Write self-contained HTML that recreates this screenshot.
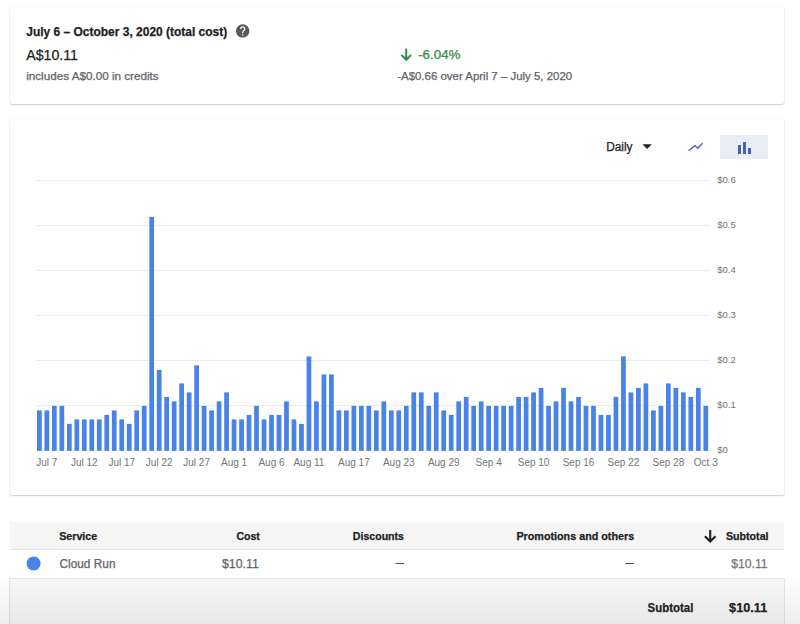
<!DOCTYPE html>
<html><head><meta charset="utf-8">
<style>
html,body{margin:0;padding:0;background:#fff;width:800px;height:624px;overflow:hidden;position:relative;font-family:"Liberation Sans",sans-serif;color:#202124}
.box{position:absolute}
.card{position:absolute;background:#fff;box-shadow:0 1px 1.5px 0 rgba(0,0,0,.18),0 0 1.5px 0 rgba(0,0,0,.12);border-radius:2px}
svg{position:absolute;left:0;top:0}
</style></head><body>
<div class="card" style="left:10px;top:7px;width:774px;height:97px"></div>
<div class="card" style="left:10px;top:119px;width:774px;height:376px"></div>
<div class="box" style="left:720px;top:135.25px;width:48px;height:23.25px;background:#e8edf8"></div>
<div class="box" style="left:10px;top:522px;width:774px;height:27px;background:#f5f5f5"></div>
<div class="box" style="left:10px;top:549px;width:774px;height:1px;background:#e6e6e6"></div>
<div class="box" style="left:9px;top:578px;width:774px;height:60px;background:#f8f8f8;border:1px solid #e3e3e3;border-bottom:0"></div>
<div class="box" style="left:0;top:578px;width:800px;height:46px;background:linear-gradient(rgba(0,0,0,0.005),rgba(0,0,0,0.065))"></div>
<svg width="800" height="624" font-family="Liberation Sans">
<g transform="translate(234.72 22.92) scale(0.665)"><path fill="#56595d" d="M12 2C6.48 2 2 6.48 2 12s4.48 10 10 10 10-4.48 10-10S17.52 2 12 2zm1 17h-2v-2h2v2zm2.07-7.75l-.9.92C13.45 12.9 13 13.5 13 15h-2v-.5c0-1.1.45-2.1 1.170-2.83l1.24-1.26c.37-.36.59-.86.59-1.41 0-1.1-.9-2-2-2s-2 .9-2 2H8c0-2.21 1.79-4 4-4s4 1.79 4 4c0 .88-.36 1.680-.93 2.250z"/></g>
<path d="M406.2 48.6 V59.5 M401.3 54.9 L406.2 59.8 L411.1 54.9" fill="none" stroke="#378a4a" stroke-width="2"/>
<path d="M642.5 144.2 L651.8 144.2 L647.15 149 Z" fill="#202124"/>
<polyline points="688.5,150.8 695,145.6 697.8,148.2 702.6,143.2" fill="none" stroke="#4464b8" stroke-width="1.4"/>
<g fill="#4263b8"><rect x="738" y="145" width="3" height="9"/><rect x="743" y="142" width="3" height="12"/><rect x="748" y="148" width="3" height="6"/></g>
<g stroke="#ebebeb" stroke-width="1"><line x1="36" x2="710" y1="180.5" y2="180.5"/>
<line x1="36" x2="710" y1="225.5" y2="225.5"/>
<line x1="36" x2="710" y1="270.5" y2="270.5"/>
<line x1="36" x2="710" y1="315.5" y2="315.5"/>
<line x1="36" x2="710" y1="360.5" y2="360.5"/>
<line x1="36" x2="710" y1="405.5" y2="405.5"/></g>
<g fill="#4a83e8"><rect x="37.00" y="410.40" width="4.75" height="40.50"/>
<rect x="44.49" y="410.40" width="4.75" height="40.50"/>
<rect x="51.98" y="405.90" width="4.75" height="45.00"/>
<rect x="59.46" y="405.90" width="4.75" height="45.00"/>
<rect x="66.95" y="423.90" width="4.75" height="27.00"/>
<rect x="74.44" y="419.40" width="4.75" height="31.50"/>
<rect x="81.93" y="419.40" width="4.75" height="31.50"/>
<rect x="89.42" y="419.40" width="4.75" height="31.50"/>
<rect x="96.90" y="419.40" width="4.75" height="31.50"/>
<rect x="104.39" y="414.90" width="4.75" height="36.00"/>
<rect x="111.88" y="410.40" width="4.75" height="40.50"/>
<rect x="119.37" y="419.40" width="4.75" height="31.50"/>
<rect x="126.86" y="423.90" width="4.75" height="27.00"/>
<rect x="134.34" y="410.40" width="4.75" height="40.50"/>
<rect x="141.83" y="405.90" width="4.75" height="45.00"/>
<rect x="149.32" y="216.90" width="4.75" height="234.00"/>
<rect x="156.81" y="369.90" width="4.75" height="81.00"/>
<rect x="164.30" y="396.90" width="4.75" height="54.00"/>
<rect x="171.78" y="401.40" width="4.75" height="49.50"/>
<rect x="179.27" y="383.40" width="4.75" height="67.50"/>
<rect x="186.76" y="392.40" width="4.75" height="58.50"/>
<rect x="194.25" y="365.40" width="4.75" height="85.50"/>
<rect x="201.74" y="405.90" width="4.75" height="45.00"/>
<rect x="209.22" y="410.40" width="4.75" height="40.50"/>
<rect x="216.71" y="401.40" width="4.75" height="49.50"/>
<rect x="224.20" y="392.40" width="4.75" height="58.50"/>
<rect x="231.69" y="419.40" width="4.75" height="31.50"/>
<rect x="239.18" y="419.40" width="4.75" height="31.50"/>
<rect x="246.66" y="414.90" width="4.75" height="36.00"/>
<rect x="254.15" y="405.90" width="4.75" height="45.00"/>
<rect x="261.64" y="419.40" width="4.75" height="31.50"/>
<rect x="269.13" y="414.90" width="4.75" height="36.00"/>
<rect x="276.62" y="414.90" width="4.75" height="36.00"/>
<rect x="284.10" y="401.40" width="4.75" height="49.50"/>
<rect x="291.59" y="419.40" width="4.75" height="31.50"/>
<rect x="299.08" y="423.90" width="4.75" height="27.00"/>
<rect x="306.57" y="356.40" width="4.75" height="94.50"/>
<rect x="314.06" y="401.40" width="4.75" height="49.50"/>
<rect x="321.54" y="374.40" width="4.75" height="76.50"/>
<rect x="329.03" y="374.40" width="4.75" height="76.50"/>
<rect x="336.52" y="410.40" width="4.75" height="40.50"/>
<rect x="344.01" y="410.40" width="4.75" height="40.50"/>
<rect x="351.50" y="405.90" width="4.75" height="45.00"/>
<rect x="358.98" y="405.90" width="4.75" height="45.00"/>
<rect x="366.47" y="405.90" width="4.75" height="45.00"/>
<rect x="373.96" y="410.40" width="4.75" height="40.50"/>
<rect x="381.45" y="401.40" width="4.75" height="49.50"/>
<rect x="388.94" y="410.40" width="4.75" height="40.50"/>
<rect x="396.42" y="410.40" width="4.75" height="40.50"/>
<rect x="403.91" y="405.90" width="4.75" height="45.00"/>
<rect x="411.40" y="392.40" width="4.75" height="58.50"/>
<rect x="418.89" y="392.40" width="4.75" height="58.50"/>
<rect x="426.38" y="405.90" width="4.75" height="45.00"/>
<rect x="433.86" y="392.40" width="4.75" height="58.50"/>
<rect x="441.35" y="410.40" width="4.75" height="40.50"/>
<rect x="448.84" y="414.90" width="4.75" height="36.00"/>
<rect x="456.33" y="401.40" width="4.75" height="49.50"/>
<rect x="463.82" y="396.90" width="4.75" height="54.00"/>
<rect x="471.30" y="405.90" width="4.75" height="45.00"/>
<rect x="478.79" y="401.40" width="4.75" height="49.50"/>
<rect x="486.28" y="405.90" width="4.75" height="45.00"/>
<rect x="493.77" y="405.90" width="4.75" height="45.00"/>
<rect x="501.26" y="405.90" width="4.75" height="45.00"/>
<rect x="508.74" y="405.90" width="4.75" height="45.00"/>
<rect x="516.23" y="396.90" width="4.75" height="54.00"/>
<rect x="523.72" y="396.90" width="4.75" height="54.00"/>
<rect x="531.21" y="392.40" width="4.75" height="58.50"/>
<rect x="538.70" y="387.90" width="4.75" height="63.00"/>
<rect x="546.18" y="405.90" width="4.75" height="45.00"/>
<rect x="553.67" y="401.40" width="4.75" height="49.50"/>
<rect x="561.16" y="387.90" width="4.75" height="63.00"/>
<rect x="568.65" y="401.40" width="4.75" height="49.50"/>
<rect x="576.14" y="396.90" width="4.75" height="54.00"/>
<rect x="583.62" y="405.90" width="4.75" height="45.00"/>
<rect x="591.11" y="405.90" width="4.75" height="45.00"/>
<rect x="598.60" y="414.90" width="4.75" height="36.00"/>
<rect x="606.09" y="414.90" width="4.75" height="36.00"/>
<rect x="613.58" y="396.90" width="4.75" height="54.00"/>
<rect x="621.06" y="356.40" width="4.75" height="94.50"/>
<rect x="628.55" y="392.40" width="4.75" height="58.50"/>
<rect x="636.04" y="387.90" width="4.75" height="63.00"/>
<rect x="643.53" y="383.40" width="4.75" height="67.50"/>
<rect x="651.02" y="410.40" width="4.75" height="40.50"/>
<rect x="658.50" y="405.90" width="4.75" height="45.00"/>
<rect x="665.99" y="383.40" width="4.75" height="67.50"/>
<rect x="673.48" y="387.90" width="4.75" height="63.00"/>
<rect x="680.97" y="392.40" width="4.75" height="58.50"/>
<rect x="688.46" y="396.90" width="4.75" height="54.00"/>
<rect x="695.94" y="387.90" width="4.75" height="63.00"/>
<rect x="703.43" y="405.90" width="4.75" height="45.00"/></g>
<g font-size="10" fill="#757575" text-anchor="middle"><text x="46.86" y="465.5">Jul 7</text>
<text x="84.30" y="465.5">Jul 12</text>
<text x="121.74" y="465.5">Jul 17</text>
<text x="159.18" y="465.5">Jul 22</text>
<text x="196.62" y="465.5">Jul 27</text>
<text x="234.06" y="465.5">Aug 1</text>
<text x="271.50" y="465.5">Aug 6</text>
<text x="308.94" y="465.5">Aug 11</text>
<text x="353.87" y="465.5">Aug 17</text>
<text x="398.80" y="465.5">Aug 23</text>
<text x="443.73" y="465.5">Aug 29</text>
<text x="488.66" y="465.5">Sep 4</text>
<text x="533.58" y="465.5">Sep 10</text>
<text x="578.51" y="465.5">Sep 16</text>
<text x="623.44" y="465.5">Sep 22</text>
<text x="668.37" y="465.5">Sep 28</text>
<text x="705.81" y="465.5">Oct 3</text></g>
<g font-size="9.6" fill="#757575"><text x="717.2" y="182.9">$0.6</text>
<text x="717.2" y="227.9">$0.5</text>
<text x="717.2" y="272.9">$0.4</text>
<text x="717.2" y="317.9">$0.3</text>
<text x="717.2" y="362.9">$0.2</text>
<text x="717.2" y="407.9">$0.1</text>
<text x="717.2" y="452.9">$0</text></g>
<path d="M710.2 530 V541 M704.9 536.2 L710.2 541.5 L715.5 536.2" fill="none" stroke="#202124" stroke-width="2.1"/>
<circle cx="33.6" cy="563.5" r="7" fill="#4a83e8"/>
<line x1="395.5" x2="404" y1="563.5" y2="563.5" stroke="#4a4d51" stroke-width="1"/>
<line x1="625.4" x2="634.2" y1="563.5" y2="563.5" stroke="#4a4d51" stroke-width="1"/>
<text x="26.3" y="35.5" font-size="12" fill="#202124" stroke="#202124" stroke-width="0.25" font-weight="bold" text-anchor="start" textLength="200.90" lengthAdjust="spacingAndGlyphs">July 6 – October 3, 2020 (total cost)</text>
<text x="26.3" y="59.9" font-size="14.5" fill="#202124" stroke="#202124" stroke-width="0.25" text-anchor="start" textLength="51.60" lengthAdjust="spacingAndGlyphs">A$10.11</text>
<text x="26.2" y="80" font-size="11" fill="#5f6368" stroke="#5f6368" stroke-width="0.25" text-anchor="start" textLength="132.50" lengthAdjust="spacingAndGlyphs">includes A$0.00 in credits</text>
<text x="418.2" y="59.4" font-size="12.5" fill="#378a4a" stroke="#378a4a" stroke-width="0.25" text-anchor="start" textLength="42.20" lengthAdjust="spacingAndGlyphs">-6.04%</text>
<text x="397.2" y="79.7" font-size="11" fill="#5f6368" stroke="#5f6368" stroke-width="0.25" text-anchor="start" textLength="175.00" lengthAdjust="spacingAndGlyphs">-A$0.66 over April 7 – July 5, 2020</text>
<text x="606.2" y="150.75" font-size="12" fill="#202124" stroke="#202124" stroke-width="0.25" text-anchor="start" textLength="26.30" lengthAdjust="spacingAndGlyphs">Daily</text>
<text x="59.2" y="539.6" font-size="11" fill="#202124" stroke="#202124" stroke-width="0.25" font-weight="bold" text-anchor="start" textLength="38.00" lengthAdjust="spacingAndGlyphs">Service</text>
<text x="259.9" y="539.6" font-size="11" fill="#202124" stroke="#202124" stroke-width="0.25" font-weight="bold" text-anchor="end" textLength="23.50" lengthAdjust="spacingAndGlyphs">Cost</text>
<text x="404" y="539.6" font-size="11" fill="#202124" stroke="#202124" stroke-width="0.25" font-weight="bold" text-anchor="end" textLength="51.20" lengthAdjust="spacingAndGlyphs">Discounts</text>
<text x="634.2" y="539.6" font-size="11" fill="#202124" stroke="#202124" stroke-width="0.25" font-weight="bold" text-anchor="end" textLength="117.80" lengthAdjust="spacingAndGlyphs">Promotions and others</text>
<text x="768.5" y="539.6" font-size="11" fill="#202124" stroke="#202124" stroke-width="0.25" font-weight="bold" text-anchor="end" textLength="42.50" lengthAdjust="spacingAndGlyphs">Subtotal</text>
<text x="59.5" y="567.6" font-size="12" fill="#5f6368" stroke="#5f6368" stroke-width="0.25" text-anchor="start" textLength="56.00" lengthAdjust="spacingAndGlyphs">Cloud Run</text>
<text x="258.8" y="567.6" font-size="12" fill="#5f6368" stroke="#5f6368" stroke-width="0.25" text-anchor="end" textLength="36.80" lengthAdjust="spacingAndGlyphs">$10.11</text>
<text x="767.6" y="567.6" font-size="12" fill="#777777" stroke="#777777" stroke-width="0.25" text-anchor="end" textLength="36.40" lengthAdjust="spacingAndGlyphs">$10.11</text>
<text x="647.5" y="612" font-size="12.5" fill="#202124" stroke="#202124" stroke-width="0.25" font-weight="bold" text-anchor="start" textLength="45.90" lengthAdjust="spacingAndGlyphs">Subtotal</text>
<text x="767.2" y="612" font-size="12.5" fill="#202124" stroke="#202124" stroke-width="0.25" font-weight="bold" text-anchor="end" textLength="38.10" lengthAdjust="spacingAndGlyphs">$10.11</text>
</svg>
</body></html>
